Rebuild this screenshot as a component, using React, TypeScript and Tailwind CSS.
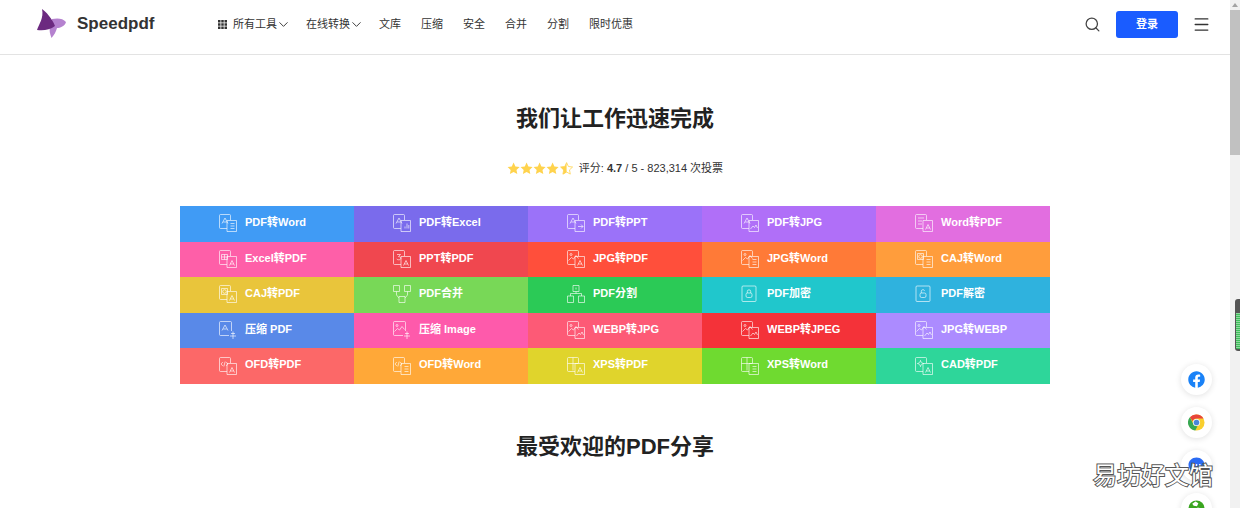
import type { ReactNode } from 'react'
import { ChevronDown, Menu, Search } from 'lucide-react'
import { FaFacebook } from 'react-icons/fa'

type Glyph = 'pdf' | 'word' | 'excel' | 'ppt' | 'img' | 'caj' | 'ofd' | 'xps' | 'cad' | 'arrow'

const navItems = ['文库', '压缩', '安全', '合并', '分割', '限时优惠']

const tools: { label: string; bg: string; icon: string }[] = [
  { label: 'PDF转Word', bg: 'bg-[#409bf5]', icon: 'pdf-word' },
  { label: 'PDF转Excel', bg: 'bg-[#7a6bec]', icon: 'pdf-excel' },
  { label: 'PDF转PPT', bg: 'bg-[#9b72f9]', icon: 'pdf-arrow' },
  { label: 'PDF转JPG', bg: 'bg-[#b06ff8]', icon: 'pdf-img' },
  { label: 'Word转PDF', bg: 'bg-[#e26ee0]', icon: 'word-pdf' },
  { label: 'Excel转PDF', bg: 'bg-[#fe5fa8]', icon: 'excel-pdf' },
  { label: 'PPT转PDF', bg: 'bg-[#f0474f]', icon: 'ppt-pdf' },
  { label: 'JPG转PDF', bg: 'bg-[#ff4f3b]', icon: 'img-pdf' },
  { label: 'JPG转Word', bg: 'bg-[#ff7a37]', icon: 'img-word' },
  { label: 'CAJ转Word', bg: 'bg-[#ff9d3c]', icon: 'caj-word' },
  { label: 'CAJ转PDF', bg: 'bg-[#e9c53b]', icon: 'caj-pdf' },
  { label: 'PDF合并', bg: 'bg-[#78d857]', icon: 'merge' },
  { label: 'PDF分割', bg: 'bg-[#2bca56]', icon: 'split' },
  { label: 'PDF加密', bg: 'bg-[#20c7cc]', icon: 'lock' },
  { label: 'PDF解密', bg: 'bg-[#2fb2de]', icon: 'unlock' },
  { label: '压缩 PDF', bg: 'bg-[#5989e8]', icon: 'zip-pdf' },
  { label: '压缩 Image', bg: 'bg-[#fe5aab]', icon: 'zip-img' },
  { label: 'WEBP转JPG', bg: 'bg-[#fd5a76]', icon: 'img-img' },
  { label: 'WEBP转JPEG', bg: 'bg-[#f43239]', icon: 'img-img' },
  { label: 'JPG转WEBP', bg: 'bg-[#ac8bff]', icon: 'img-img' },
  { label: 'OFD转PDF', bg: 'bg-[#fc6868]', icon: 'ofd-pdf' },
  { label: 'OFD转Word', bg: 'bg-[#ffa838]', icon: 'ofd-word' },
  { label: 'XPS转PDF', bg: 'bg-[#e0d42c]', icon: 'xps-pdf' },
  { label: 'XPS转Word', bg: 'bg-[#6fda30]', icon: 'xps-word' },
  { label: 'CAD转PDF', bg: 'bg-[#2ed69a]', icon: 'cad-pdf' },
]

// glyph drawn inside the front sheet
function FrontGlyph({ g }: { g: Glyph }) {
  switch (g) {
    case 'pdf':
      return <path d="M3 9.500 6 4l3 5.500M4.200 8h3.600" />
    case 'word':
      return <path d="M3 4h6M3 7h4M3 10h4" />
    case 'excel':
      return <path d="M2.500 4.500h6v5h-6zM5.500 4.500v5M2.500 7h6" />
    case 'ppt':
      return <path d="M4 4.500h3.500l-2 2.200c1.600 0 2.300.6 2.300 1.500S7 9.800 5.800 9.800 4 9.400 3.700 8.800" />
    case 'img':
      return (
        <>
          <circle cx="4" cy="4.500" r="1" />
          <path d="m1.500 10.500 3-3 2 1.500 2.500-3.500 2.500 3" />
        </>
      )
    case 'caj':
      return (
        <>
          <circle cx="5.500" cy="6.500" r="1.800" />
          <path d="M2.500 3.500h6v6h-6z" />
        </>
      )
    case 'ofd':
      return <path d="M3.800 5 2 7l1.800 2M7.200 5 9 7 7.200 9M6.200 4.500 4.800 9.500" />
    case 'xps':
      return <path d="M.5 6.500h11M6 .5v13" />
    case 'cad':
      return (
        <>
          <circle cx="5.500" cy="6.500" r="1.800" />
          <path d="M5.500 3v1.500M5.500 8.500V10M2 6.500h1.500M7.500 6.500H9" />
        </>
      )
    default:
      return null
  }
}

function BackGlyph({ g }: { g: Glyph }) {
  switch (g) {
    case 'pdf':
      return <path d="m10.500 15.500 2.500-5 2.500 5M11.300 14h3.400" />
    case 'word':
      return <path d="M11.500 9.500h4M11.500 12h4M11.500 14.500h4" />
    case 'excel':
      return <path d="M14 9.500v5M12 14.500v-2M15.800 14.500V11" />
    case 'arrow':
      return <path d="M11 12.500h5M14 10.500l2 2-2 2" />
    case 'img':
      return <path d="m9.500 15 2.500-3 1.500 1.500 1.500-2.500 1.500 3" />
    default:
      return null
  }
}

function ToolIcon({ name }: { name: string }) {
  let inner: ReactNode
  if (name === 'merge') {
    inner = (
      <>
        <path d="M.5.500h6v6h-6zM11.500.500h6v6h-6zM6 11.500h6v6H6z" />
        <path d="M3.500 6.500V10l2.500 3M14.500 6.500V10L12 13" />
      </>
    )
  } else if (name === 'split') {
    inner = (
      <>
        <path d="M6 .5h6v6H6zM.5 11h6v6.500h-6zM11.500 11h6v6.500h-6z" />
        <path d="M3.500 11V8.500h11V11M9 6.500v2M9 2.500v2" />
      </>
    )
  } else if (name === 'lock' || name === 'unlock') {
    inner = (
      <>
        <rect x="1" y="1" width="14" height="15.500" rx="1" />
        <rect x="5" y="8" width="6" height="4.500" rx="1.500" />
        <path d={name === 'lock' ? 'M6.300 8V6.500a1.700 1.700 0 0 1 3.400 0V8' : 'M6.300 8V6.300a1.700 1.700 0 0 1 3.300-.5'} />
      </>
    )
  } else if (name === 'zip-pdf' || name === 'zip-img') {
    inner = (
      <>
        <path d="M10 14.500H1.500a1 1 0 0 1-1-1v-12a1 1 0 0 1 1-1h10a1 1 0 0 1 1 1V10" />
        <FrontGlyph g={name === 'zip-pdf' ? 'pdf' : 'img'} />
        <path d="M14 10.500v7.500M11 15h6M12 12.500h4" />
      </>
    )
  } else {
    const [front, back] = name.split('-') as [Glyph, Glyph]
    inner = (
      <>
        <path d="M8 14.500H1.500a1 1 0 0 1-1-1v-12a1 1 0 0 1 1-1h9a1 1 0 0 1 1 1V6" />
        <path d="M8 6.500h9.500v11H8z" />
        <FrontGlyph g={front} />
        <BackGlyph g={back} />
      </>
    )
  }
  return (
    <svg
      viewBox="0 0 18 18"
      fill="none"
      stroke="currentColor"
      strokeWidth="0.9"
      className="h-[18px] w-[18px] shrink-0 text-white/70"
    >
      {inner}
    </svg>
  )
}

function Star({ half }: { half?: boolean }) {
  const d = 'M6.500.6l1.800 3.900 4.200.5-3.100 2.900.8 4.200-3.700-2.100-3.700 2.100.8-4.200L.5 5l4.200-.5z'
  return (
    <svg viewBox="0 0 13 13" className="h-[13px] w-[13.2px]">
      {half ? (
        <>
          <path d={d} fill="none" stroke="#ffd34d" strokeWidth="0.8" />
          <path d="M6.500.6v9.700l-3.700 2.100.8-4.200L.5 5l4.200-.5z" fill="#ffd34d" />
        </>
      ) : (
        <path d={d} fill="#ffd34d" />
      )}
    </svg>
  )
}

function Logo() {
  return (
    <svg viewBox="0 0 30 30" className="h-[30px] w-[30px]">
      <path d="M15 10c5-1 11-1 14 3-1 4-6 6-9 6-1 4-3 7-5.500 10-1.500-4-2.500-8-1.500-11z" fill="#b582cf" />
      <path d="M5 0c4 3 10 9 13 17-5 4-12 5-18 4 2-6 7-12 5-21z" fill="#6c2a80" />
    </svg>
  )
}

function ChromeIcon() {
  return (
    <svg viewBox="0 0 18 18" className="h-[17px] w-[17px]">
      <circle cx="9" cy="9" r="8.500" fill="#f9cf2e" />
      <path d="M9 .5a8.500 8.500 0 0 1 7.400 4.300H9a4.200 4.200 0 0 0-4 3L2 3.500A8.500 8.500 0 0 1 9 .5z" fill="#e8453c" />
      <path d="M2 3.500 5.600 10.500A4.200 4.200 0 0 0 10 13l-2.300 4.400A8.500 8.500 0 0 1 2 3.500z" fill="#37a853" />
      <circle cx="9" cy="9" r="3.800" fill="#fff" />
      <circle cx="9" cy="9" r="3" fill="#4a86d8" />
    </svg>
  )
}

function MessengerIcon() {
  return (
    <svg viewBox="0 0 18 18" className="h-[17px] w-[17px]">
      <path d="M9 .5C4.300.5.500 4 .5 8.300c0 2.400 1.200 4.500 3 5.900V17l2.700-1.500c.9.300 1.800.4 2.800.4 4.700 0 8.500-3.400 8.500-7.600S13.700.5 9 .5z" fill="#2b6bf3" />
      <circle cx="5.500" cy="8.500" r="1" fill="#fff" />
      <circle cx="9" cy="8.500" r="1" fill="#fff" />
      <circle cx="12.500" cy="8.500" r="1" fill="#fff" />
    </svg>
  )
}

function GlobeIcon() {
  return (
    <svg viewBox="0 0 18 18" className="h-[17px] w-[17px]">
      <circle cx="9" cy="9" r="8.500" fill="#3aa51f" />
      <path d="M8 1.500 11 3.500 9.500 6.500 6 6 4.500 4zM10 8l5 1-2 5-3 1.500z" fill="#fff" />
    </svg>
  )
}

function FloatButton({ children }: { children: ReactNode }) {
  return (
    <div className="flex h-[31px] w-[31px] shrink-0 items-center justify-center rounded-full bg-white shadow-[0_1px_6px_rgba(0,0,0,0.12)]">
      {children}
    </div>
  )
}

export default function App() {
  return (
    <div className="relative flex h-[508px] w-[1240px] overflow-hidden bg-white font-['Liberation_Sans','Noto_Sans_CJK_SC',sans-serif]">
      <div className="min-w-0 flex-1">
        <header className="flex h-[55px] items-center border-b border-[#e3e3e3] pb-[6px] pl-[37px] pr-[19px]">
          <Logo />
          <span className="ml-[10px] w-[141px] text-[17px] font-semibold text-[#333]">Speedpdf</span>
          <nav className="flex items-center text-[11px] text-[#333]">
            <div className="mr-[15px] flex items-center">
              <svg viewBox="0 0 9 9" className="mr-[6px] h-[9px] w-[9px]" fill="#333">
                <path d="M0 0h2.500v2.500H0zM3.250 0h2.500v2.500h-2.500zM6.500 0H9v2.500H6.500zM0 3.250h2.500v2.500H0zM3.250 3.250h2.500v2.500h-2.500zM6.500 3.250H9v2.500H6.500zM0 6.500h2.500V9H0zM3.250 6.500h2.500V9h-2.500zM6.500 6.500H9V9H6.500z" />
              </svg>
              所有工具
              <ChevronDown size={15} strokeWidth={1.5} className="ml-[-1px]" />
            </div>
            <div className="mr-[15px] flex items-center">
              在线转换
              <ChevronDown size={15} strokeWidth={1.5} className="ml-[-1px]" />
            </div>
            <div className="flex items-center gap-[20px]">
              {navItems.map((item) => (
                <span key={item}>{item}</span>
              ))}
            </div>
          </nav>
          <div className="ml-auto flex items-center">
            <Search size={17} strokeWidth={1.8} className="text-[#444]" />
            <button className="ml-[15px] h-[27px] w-[62px] rounded-[3px] bg-[#1a5cff] text-[11px] font-bold text-white">
              登录
            </button>
            <Menu size={19} strokeWidth={1.6} className="ml-[14px] text-[#333]" />
          </div>
        </header>

        <main className="flex flex-col items-center">
          <h1 className="mt-[47px] h-[34px] text-[22px] leading-[34px] font-bold text-[#222]">我们让工作迅速完成</h1>
          <div className="mt-[22px] flex h-[20px] w-[870px] items-center justify-center text-[11px] text-[#333]">
            <div className="flex">
              <Star />
              <Star />
              <Star />
              <Star />
              <Star half />
            </div>
            <span className="ml-[6px]">
              评分: <b className="font-bold">4.7</b> / 5 - 823,314 次投票
            </span>
          </div>
          <div className="mt-[28px] grid w-[870px] grid-cols-5">
            {tools.map((t) => (
              <div key={t.label} className={'flex h-[35.6px] items-center pb-px ' + t.bg}>
                <div className="ml-[39px] flex items-center gap-[8px]">
                  <ToolIcon name={t.icon} />
                  <span className="mb-[2px] text-[11px] font-bold whitespace-nowrap text-white">{t.label}</span>
                </div>
              </div>
            ))}
          </div>
          <h2 className="mt-[46px] text-[22px] leading-[34px] font-bold text-[#222]">最受欢迎的PDF分享</h2>
        </main>
      </div>

      <div className="flex w-[10px] shrink-0 flex-col bg-[#f1f1f1]">
        <div className="flex h-[10px] items-center justify-center">
          <div className="h-0 w-0 border-x-[3px] border-b-[4px] border-x-transparent border-b-[#a3a3a3]" />
        </div>
        <div className="h-[145px] bg-[#c1c1c1]" />
      </div>

      <div className="absolute top-[299px] right-0 h-[52px] w-[5px] rounded-l-[3px] border-t-[14px] border-b-[2px] border-l border-[#555] bg-[repeating-linear-gradient(0deg,#3fbf5a_0px,#3fbf5a_1px,#8fd8a0_1px,#8fd8a0_2px)]" />

      <div className="absolute top-[364px] left-[1181px] flex flex-col gap-[12px]">
        <FloatButton>
          <FaFacebook className="h-[17px] w-[17px] text-[#1a82f7]" />
        </FloatButton>
        <FloatButton>
          <ChromeIcon />
        </FloatButton>
        <FloatButton>
          <MessengerIcon />
        </FloatButton>
        <FloatButton>
          <GlobeIcon />
        </FloatButton>
      </div>

      <div className="absolute top-[459px] left-[1093px] text-[24px] leading-[34px] text-white [-webkit-text-stroke:2px_#555] [paint-order:stroke_fill]">
        易坊好文馆
      </div>
    </div>
  )
}
